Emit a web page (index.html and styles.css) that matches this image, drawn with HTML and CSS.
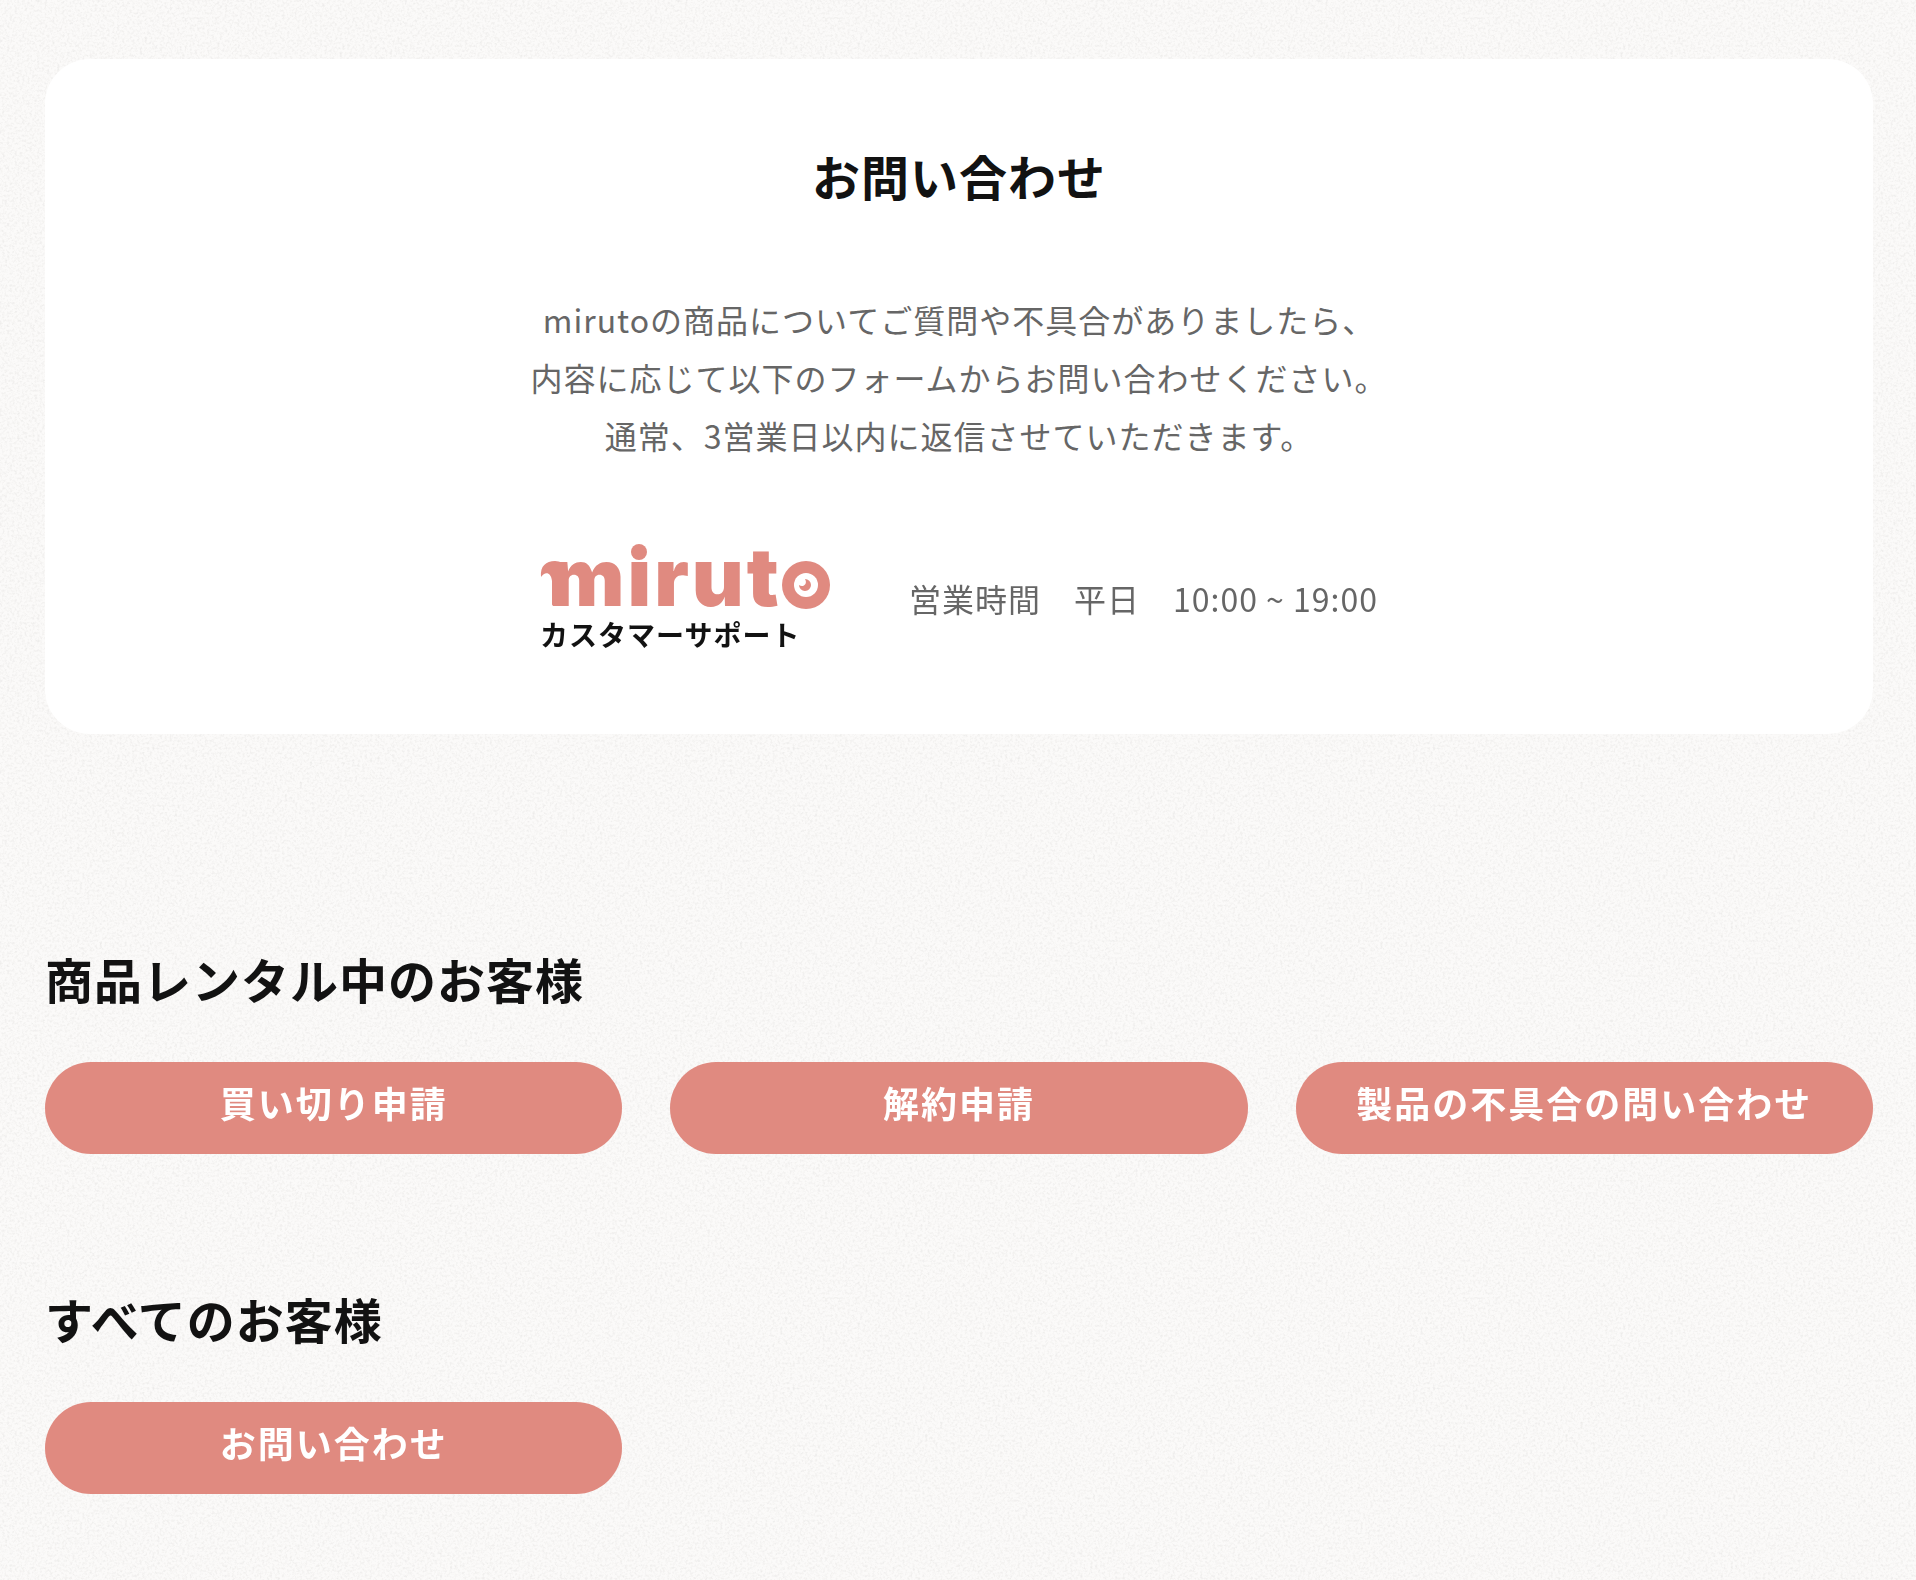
FILE: index.html
```html
<!DOCTYPE html>
<html lang="ja">
<head>
  <meta charset="UTF-8">
  <meta name="viewport" content="width=device-width, initial-scale=1.0">
  <title>お問い合わせ | miruto</title>
  <link rel="stylesheet" href="styles.css">
</head>
<body>
  <!-- paper texture -->
  <svg class="paper" aria-hidden="true">
    <filter id="grain" x="0" y="0" width="100%" height="100%">
      <feTurbulence type="fractalNoise" baseFrequency="0.4" numOctaves="3" seed="4" stitchTiles="stitch"/>
      <feColorMatrix type="matrix" values="0 0 0 0 0.5  0 0 0 0 0.49  0 0 0 0 0.47  0.3 0.3 0 0 -0.27"/>
    </filter>
    <rect width="100%" height="100%" filter="url(#grain)"/>
  </svg>

  <main class="container">
    <section class="card">
      <h1 class="title">お問い合わせ</h1>
      <p class="lead">
        mirutoの商品についてご質問や不具合がありましたら、<br>
        内容に応じて以下のフォームからお問い合わせください。<br>
        通常、3営業日以内に返信させていただきます。
      </p>
      <div class="support">
        <div class="brand">
          <svg class="logo" viewBox="0 0 289 66" role="img" aria-label="miruto">
            <text class="logo-text" x="9" y="62">mırut</text>
            <!-- tail on the left of the m -->
            <path d="M1 33C0 22 6 17 15 17C20 17 24 19 27 23V40L12 62V37C11 28 5 27 1 33Z"/>
            <circle cx="99" cy="8" r="8"/>
            <circle cx="266" cy="41" r="24"/>
            <circle class="logo-white" cx="266" cy="41" r="12"/>
            <path d="M265 35A6 6 0 1 1 259 41C263 44 268 40 265 35Z"/>
          </svg>
          <p class="caption">カスタマーサポート</p>
        </div>
        <p class="hours">営業時間　平日　10:00 ~ 19:00</p>
      </div>
    </section>

    <section class="group">
      <h2 class="title">商品レンタル中のお客様</h2>
      <div class="links">
        <a class="btn" href="#">買い切り申請</a>
        <a class="btn" href="#">解約申請</a>
        <a class="btn" href="#">製品の不具合の問い合わせ</a>
      </div>
    </section>

    <section class="group">
      <h2 class="title">すべてのお客様</h2>
      <div class="links">
        <a class="btn" href="#">お問い合わせ</a>
      </div>
    </section>
  </main>
</body>
</html>
```
FILE: styles.css
```css
* {
  box-sizing: border-box;
}

body {
  margin: 0;
  font-family: 'Noto Sans CJK JP', sans-serif;
  background: #fbfaf9;
  color: #121212;
}

.paper {
  position: fixed;
  top: 0;
  left: 0;
  width: 100%;
  height: 100%;
  z-index: -1;
}

.container {
  padding: 59px 43px 86px 45px;
}

.card {
  padding: 87px 40px 80px;
  background: #fff;
  border-radius: 45px;
  text-align: center;
}

.title {
  margin: 0;
  font-size: 48px;
  font-weight: 700;
  line-height: 58px;
  letter-spacing: 1px;
}

.lead,
.hours {
  margin: 0;
  font-size: 32px;
  line-height: 58px;
  letter-spacing: 1px;
  color: #666;
}

.lead {
  margin: 86px 0 80px;
}

.hours {
  padding-bottom: 2px;
}

.support {
  display: flex;
  justify-content: center;
  align-items: center;
  gap: 80px;
}

.brand {
  text-align: left;
}

.logo {
  display: block;
  width: 289px;
  height: 66px;
  fill: #e08a80;
  overflow: visible;
}

.logo-text {
  font-family: Inter, sans-serif;
  font-size: 80px;
  font-weight: 900;
  letter-spacing: 3px;
}

.logo-white {
  fill: #fff;
}

.caption {
  margin: 4px 0 0;
  font-size: 28px;
  font-weight: 700;
  line-height: 40px;
  letter-spacing: 1px;
}

.group {
  margin-top: 135px;
}

.card + .group {
  margin-top: 215px;
}

.links {
  display: grid;
  grid-template-columns: repeat(3, 1fr);
  gap: 48px;
  margin-top: 55px;
}

.btn {
  padding: 11px 20px 23px;
  border-radius: 46px;
  background: #e08a80;
  color: #fff;
  font-size: 36px;
  font-weight: 700;
  line-height: 58px;
  letter-spacing: 2px;
  text-align: center;
  text-decoration: none;
}

.btn:hover {
  background: #d67a70;
}

@media (max-width: 1200px) {
  .links {
    grid-template-columns: 1fr;
  }
  .support {
    flex-direction: column;
    gap: 20px;
  }
}
```
